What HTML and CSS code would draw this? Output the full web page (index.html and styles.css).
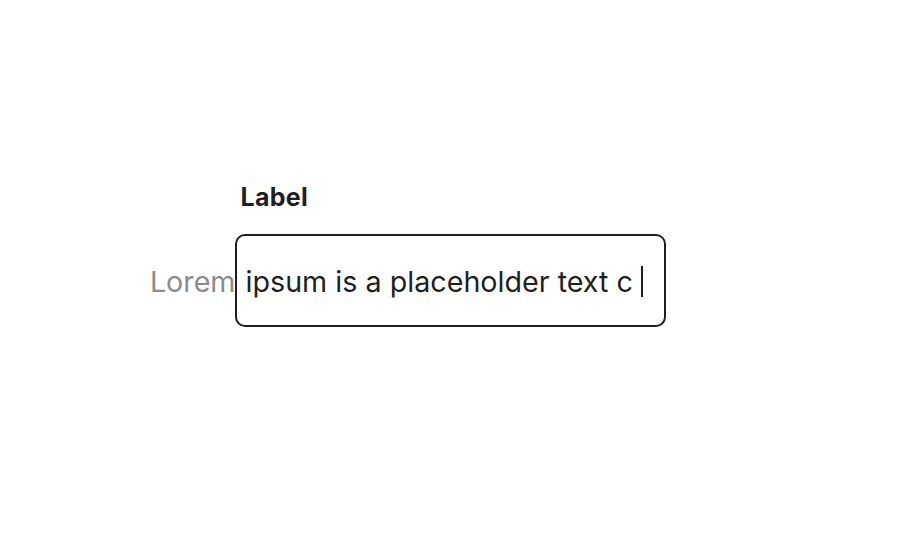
FILE: index.html
```html
<!DOCTYPE html>
<html lang="en">
<head>
    <meta charset="UTF-8">
    <meta name="viewport" content="width=device-width, initial-scale=1.0">
    <title>Text field</title>
    <link rel="stylesheet" href="styles.css">
</head>
<body>
    <div class="field">
        <div class="field-label">Label</div>
        <div class="field-box">
            <span class="overflow"><span class="overflow-text">Lorem</span></span>
            <span class="field-text">ipsum is a placeholder text c</span>
            <span class="caret"></span>
        </div>
    </div>
</body>
</html>
```

FILE: styles.css
```css
body {
    font-family: Inter, "Noto Sans", sans-serif;
    background-color: #ffffff;
    margin: 0;
    height: 540px;
    display: flex;
    justify-content: center;
}

.field {
    display: flex;
    flex-direction: column;
    padding-top: 182px;
}

.field-label {
    font-size: 25px;
    font-weight: 700;
    letter-spacing: 0.3px;
    color: #1f1f1f;
    padding-left: 6px;
    margin-bottom: 22px;
}

.field-box {
    width: 431px;
    height: 93px;
    box-sizing: border-box;
    border: 2px solid #1f1f1f;
    border-radius: 10px;
    display: flex;
    align-items: center;
    padding-left: 9px;
    padding-top: 2px;
    font-size: 28.7px;
    white-space: nowrap;
    color: #1f1f1f;
}

.overflow {
    width: 0;
    margin-left: -10px;
    margin-right: 10px;
    display: flex;
    justify-content: flex-end;
}

.overflow-text {
    color: #8c8c8c;
}

.caret {
    width: 2px;
    height: 31px;
    background-color: #1f1f1f;
    margin-left: 8px;
}
```
